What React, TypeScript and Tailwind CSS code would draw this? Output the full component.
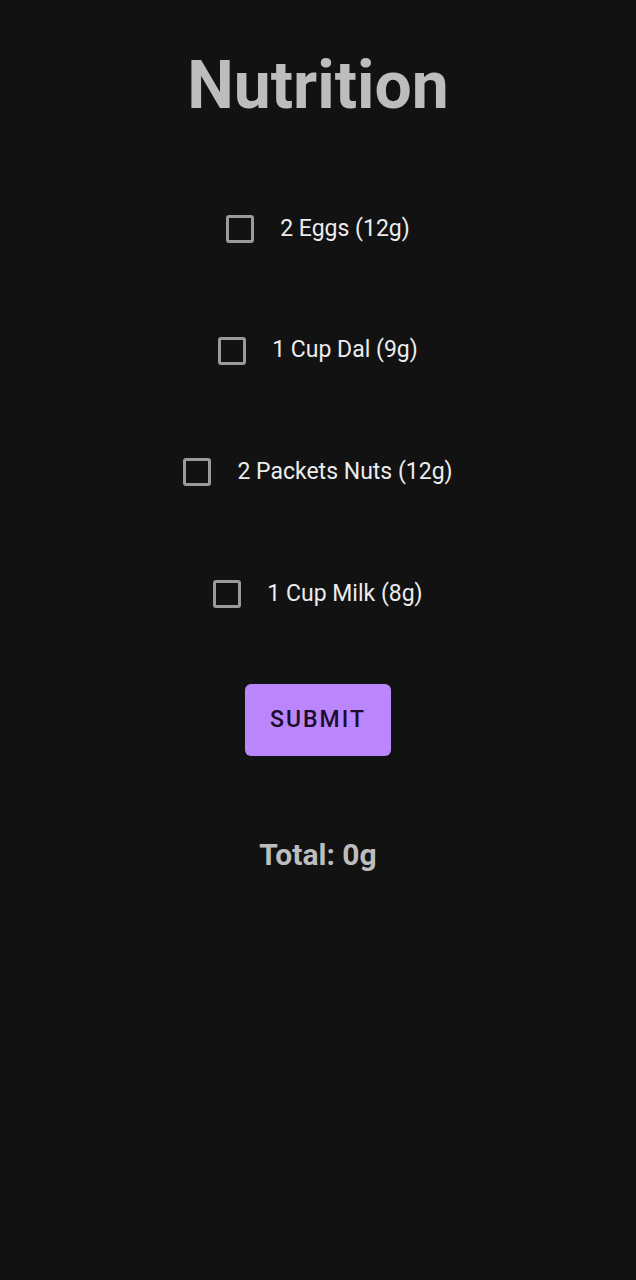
import React, { useState } from "react";

const items = [
  { label: "2 Eggs (12g)", g: 12 },
  { label: "1 Cup Dal (9g)", g: 9 },
  { label: "2 Packets Nuts (12g)", g: 12 },
  { label: "1 Cup Milk (8g)", g: 8 },
];

export default function App() {
  const [checked, setChecked] = useState<boolean[]>([false, false, false, false]);
  const [total, setTotal] = useState(0);
  return (
    <div
      className="min-h-[1280px] w-full bg-[#121212] flex flex-col items-center"
      style={{ fontFamily: "Roboto, 'Noto Sans', sans-serif" }}
    >
      <h1 className="mt-[46px] text-[66px] leading-[80px] font-bold text-[#bdbdbd]">Nutrition</h1>
      <div className="mt-[89px] flex flex-col items-center gap-[93.7px]">
        {items.map((it, i) => (
          <label key={i} className="flex items-center gap-[26px] h-[28px] cursor-pointer">
            <span
              onClick={() => {
                const c = [...checked];
                c[i] = !c[i];
                setChecked(c);
              }}
              className={`w-[28px] h-[28px] rounded-[3px] border-[3px] ${checked[i] ? "bg-[#bb86fc] border-[#bb86fc]" : "border-[#9a9a9a]"}`}
            />
            <span className="text-[23px] text-[#ececec]">{it.label}</span>
          </label>
        ))}
      </div>
      <button
        onClick={() => setTotal(items.reduce((s, it, i) => s + (checked[i] ? it.g : 0), 0))}
        className="mt-[76px] w-[146px] h-[72px] rounded-[6px] bg-[#bb86fc] text-[#1c0d2e] text-[23px] font-medium tracking-[2px]"
      >
        SUBMIT
      </button>
      <div className="mt-[76px] text-[30px] font-bold text-[#bdbdbd]">Total: {total}g</div>
    </div>
  );
}
